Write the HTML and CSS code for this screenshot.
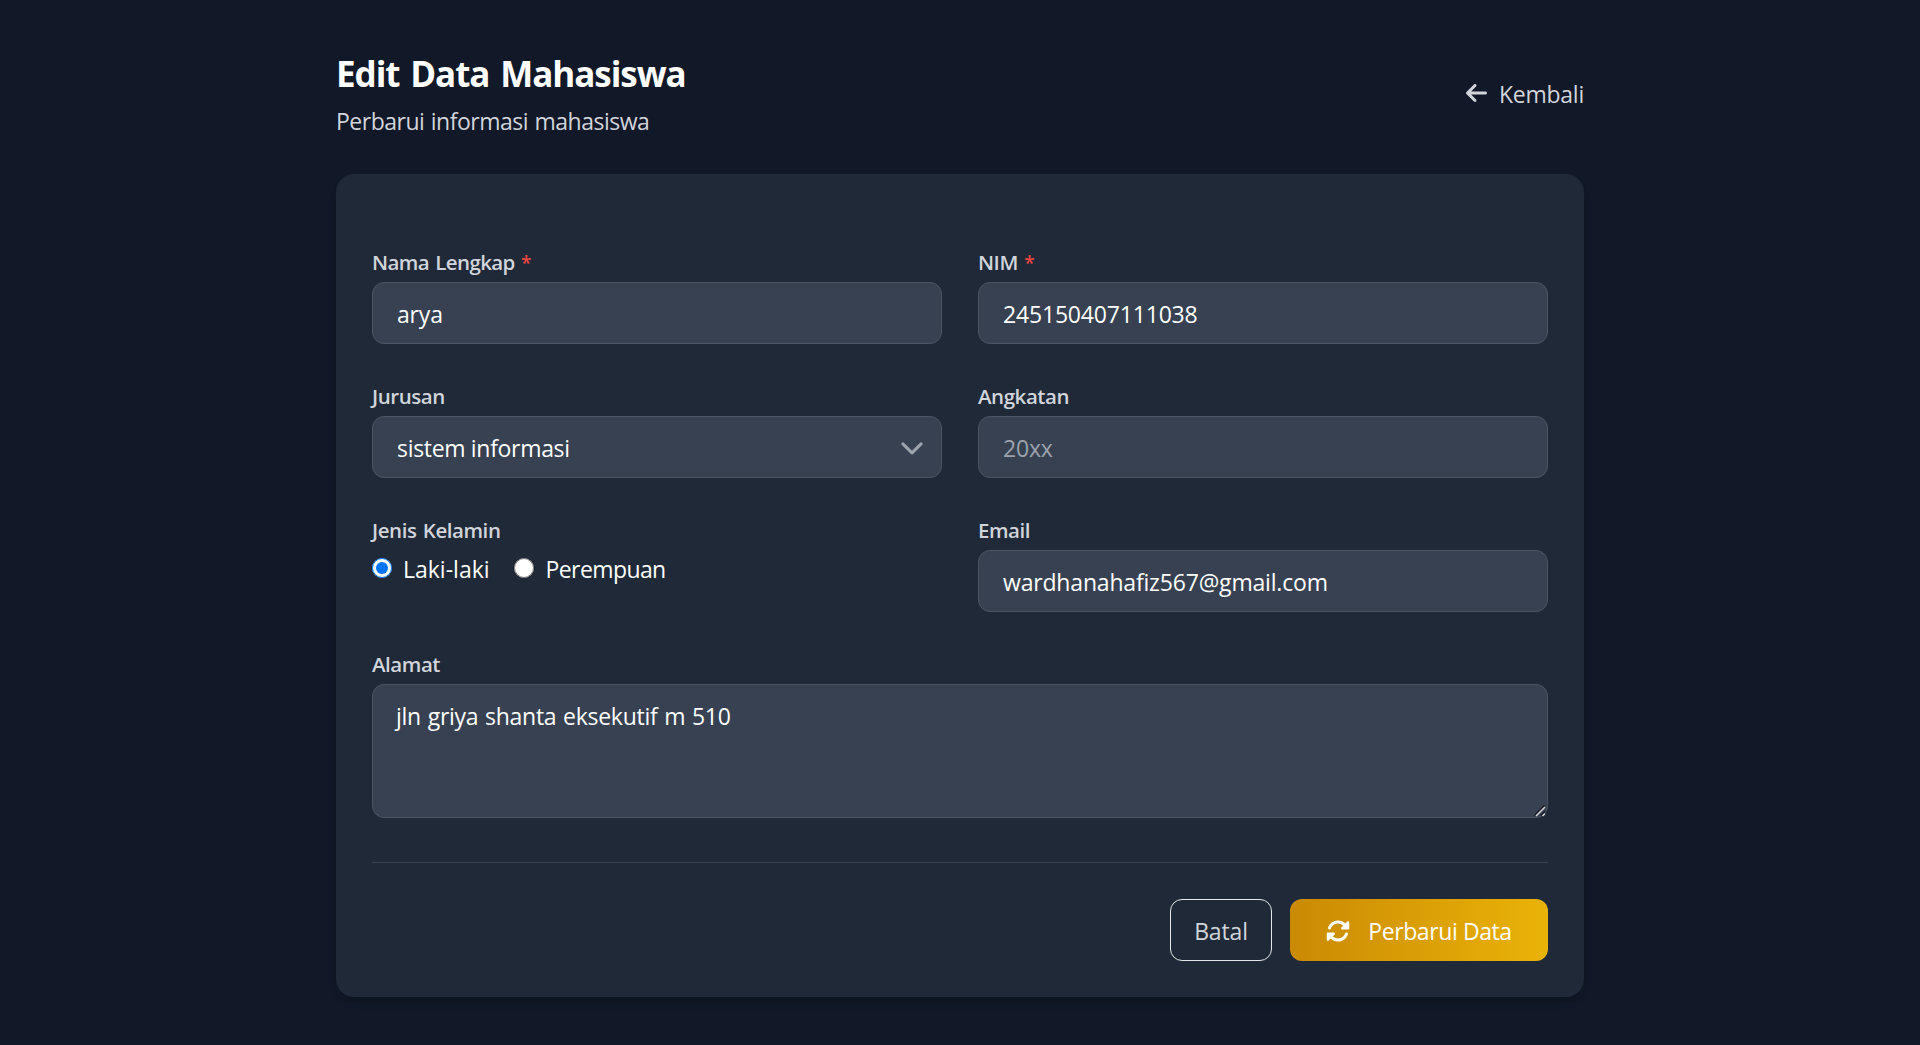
FILE: index.html
```html
<!DOCTYPE html>
<html lang="id">
<head>
<meta charset="utf-8">
<title>Edit Data Mahasiswa</title>
<link rel="stylesheet" href="styles.css">
</head>
<body>
<main class="page">
  <header class="header">
    <div>
      <h1 class="title">Edit Data Mahasiswa</h1>
      <p class="subtitle">Perbarui informasi mahasiswa</p>
    </div>
    <a class="back" href="#">
      <svg class="back-icon" viewBox="0 0 448 512" fill="currentColor"><path d="M9.4 233.4c-12.5 12.5-12.5 32.8 0 45.3l160 160c12.5 12.5 32.8 12.5 45.3 0s12.5-32.8 0-45.3L109.2 288 416 288c17.7 0 32-14.3 32-32s-14.3-32-32-32l-306.7 0L214.6 118.6c12.5-12.5 12.5-32.8 0-45.3s-32.8-12.5-45.3 0l-160 160z"/></svg>
      <span class="back-text">Kembali</span>
    </a>
  </header>

  <form class="card">
    <div class="grid">
      <div class="field">
        <label class="label label-name" for="nama">Nama Lengkap <span class="required">*</span></label>
        <input class="control" id="nama" type="text" value="arya">
      </div>
      <div class="field">
        <label class="label" for="nim">NIM <span class="required">*</span></label>
        <input class="control" id="nim" type="text" value="245150407111038">
      </div>
      <div class="field">
        <label class="label" for="jurusan">Jurusan</label>
        <div class="select-wrap">
          <select class="control select" id="jurusan"><option>sistem informasi</option></select>
          <svg class="chevron" viewBox="0 0 22 13" fill="none" stroke="currentColor" stroke-width="3" stroke-linecap="round" stroke-linejoin="round"><path d="M1.9 1.9 11 10.9 20.1 1.9"/></svg>
        </div>
      </div>
      <div class="field">
        <label class="label" for="angkatan">Angkatan</label>
        <input class="control" id="angkatan" type="text" placeholder="20xx">
      </div>
      <div class="field">
        <span class="label">Jenis Kelamin</span>
        <div class="radios">
          <label class="radio"><input class="radio-input" type="radio" name="jk" checked><span class="radio-male">Laki-laki</span></label>
          <label class="radio"><input class="radio-input" type="radio" name="jk"><span class="radio-female">Perempuan</span></label>
        </div>
      </div>
      <div class="field">
        <label class="label" for="email">Email</label>
        <input class="control" id="email" type="text" value="wardhanahafiz567@gmail.com">
      </div>
      <div class="field field-wide">
        <label class="label" for="alamat">Alamat</label>
        <div class="textarea-wrap">
          <textarea class="control textarea" id="alamat" spellcheck="false">jln griya shanta eksekutif m 510</textarea>
          <svg class="grip" viewBox="0 0 12 12" fill="none" stroke-width="1.5"><path stroke="#15181f" d="M.5 10.5 10.5.5M7 10.5l4-4"/><path stroke="#d4d6da" d="M2 11 11 2M8.5 11 11 8.5"/></svg>
        </div>
      </div>
    </div>
    <div class="actions">
      <button class="button button-cancel" type="button">Batal</button>
      <button class="button button-save" type="button">
        <svg class="save-icon" viewBox="0 0 512 512" fill="currentColor"><path d="M142.9 142.9c-17.5 17.5-30.1 38-37.8 59.8c-5.9 16.7-24.2 25.4-40.8 19.5s-25.4-24.2-19.5-40.8C55.6 150.7 73.2 122 97.6 97.6c87.2-87.2 228.3-87.5 315.8-1L455 55c6.9-6.9 17.2-8.9 26.2-5.2s14.8 12.5 14.8 22.2l0 128c0 13.3-10.7 24-24 24l-8.4 0L344 224c-9.7 0-18.5-5.8-22.2-14.8s-1.7-19.3 5.2-26.2l41.1-41.1c-62.6-61.5-163.1-61.2-225.3 1zM16 312c0-13.3 10.7-24 24-24l7.6 0 .7 0L168 288c9.7 0 18.5 5.8 22.2 14.8s1.7 19.3-5.2 26.2l-41.1 41.1c62.6 61.5 163.1 61.2 225.3-1c17.5-17.5 30.1-38 37.8-59.8c5.9-16.7 24.2-25.4 40.8-19.5s25.4 24.2 19.5 40.8c-10.8 30.6-28.4 59.3-52.9 83.8c-87.2 87.2-228.3 87.5-315.8 1L57 457c-6.9 6.9-17.2 8.9-26.2 5.2S16 449.7 16 440l0-119.6 0-.7 0-7.6z"/></svg>
        <span>Perbarui Data</span>
      </button>
    </div>
  </form>
</main>
</body>
</html>
```
FILE: styles.css
```css
*, *::before, *::after { box-sizing: border-box; }

body {
  margin: 0;
  background: #111827;
  color: #fff;
  font-family: "Open Sans", "Noto Sans", sans-serif;
  font-size: 23px;
  line-height: 36px;
}

.page { width: 1248px; margin: 0 auto; padding: 48px 0 47px; }

.header {
  display: flex;
  align-items: center;
  justify-content: space-between;
  margin-bottom: 36px;
}
.title {
  margin: 0;
  font-size: 35px;
  font-weight: 700;
  line-height: 48px;
  letter-spacing: -1.05px;
  word-spacing: 2.8px;
  padding-top: 2px;
}
.subtitle {
  margin: 5px 0 -1px;
  color: #d1d5db;
  letter-spacing: -0.5px;
  word-spacing: 1px;
}
.back {
  display: flex;
  align-items: center;
  gap: 12px;
  color: #d1d5db;
  text-decoration: none;
}
.back-icon { width: 21px; height: 24px; }
.back-text { letter-spacing: -0.24px; padding-top: 2px; }

.card {
  padding: 72px 36px 36px;
  background: #1f2937;
  border-radius: 18px;
  box-shadow: 0 6px 9px -1px rgba(0, 0, 0, 0.1), 0 3px 6px -2px rgba(0, 0, 0, 0.1);
}
.grid {
  display: grid;
  grid-template-columns: 1fr 1fr;
  gap: 36px;
}
.field { display: flex; flex-direction: column; min-width: 0; }
.field-wide { grid-column: 1 / -1; }
.label {
  height: 36px;
  color: #d1d5db;
  font-size: 20.5px;
  font-weight: 600;
  line-height: 33px;
  letter-spacing: -0.45px;
  word-spacing: 1.5px;
}
.label-name { letter-spacing: -0.6px; }
.required { color: #ef4444; font-size: 19px; }

.control {
  width: 100%;
  height: 62px;
  margin: 0;
  padding: 2px 24px 0;
  border: 1px solid #4b5563;
  border-radius: 12px;
  outline: none;
  background: #374151;
  color: #fff;
  font: inherit;
  letter-spacing: -0.18px;
}
.control::placeholder { color: #9ca3af; opacity: 1; }
.select-wrap, .textarea-wrap { position: relative; }
.select { display: block; appearance: none; letter-spacing: -0.32px; }
.chevron {
  position: absolute;
  top: 26px;
  right: 19px;
  width: 22px;
  height: 13px;
  color: #9ca3af;
  pointer-events: none;
}
.textarea {
  display: block;
  height: 134px;
  padding: 13px 24px 13px 23px;
  resize: none;
  letter-spacing: -0.28px;
  word-spacing: 1.1px;
}
.grip {
  position: absolute;
  right: 2px;
  bottom: 1px;
  width: 12px;
  height: 12px;
}

.radios { display: flex; gap: 24px; }
.radio { display: flex; align-items: center; gap: 11px; }
.radio-input { width: 20px; height: 20px; margin: 0 0 1px; }
.radio-male, .radio-female { padding-top: 1px; }
.radio-female { letter-spacing: -0.6px; padding-left: 1px; }

.actions {
  display: flex;
  justify-content: flex-end;
  gap: 18px;
  margin-top: 44px;
  padding-top: 36px;
  border-top: 1px solid #374151;
}
.button {
  display: flex;
  align-items: center;
  justify-content: center;
  height: 62px;
  padding: 2px 0 0;
  border: 0;
  border-radius: 12px;
  font: inherit;
}
.button-cancel {
  width: 102px;
  border: 1px solid #e5e7eb;
  background: transparent;
  color: #d1d5db;
  letter-spacing: -0.15px;
}
.button-save {
  width: 258px;
  gap: 18px;
  background: linear-gradient(to right, #ca8a04, #eab308);
  color: #fff;
  letter-spacing: -0.4px;
}
.save-icon { width: 24px; height: 24px; }
```
